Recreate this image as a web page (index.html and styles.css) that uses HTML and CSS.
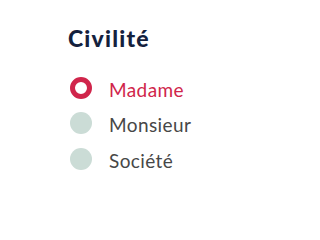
FILE: index.html
```html
<!DOCTYPE html>
<html lang="fr">
<head>
<meta charset="utf-8">
<link rel="stylesheet" href="styles.css">
</head>
<body>
<fieldset class="civility">
  <legend class="title">Civilité</legend>
  <label class="option option--checked"><span class="radio"></span><span class="label">Madame</span></label>
  <label class="option"><span class="radio"></span><span class="label">Monsieur</span></label>
  <label class="option"><span class="radio"></span><span class="label">Société</span></label>
</fieldset>
</body>
</html>
```
FILE: styles.css
```css
html, body {
  margin: 0;
  padding: 0;
  background: #ffffff;
}
body {
  font-family: Lato, "Open Sans", sans-serif;
  width: 259px;
  height: 206px;
}
.civility {
  border: 0;
  margin: 0;
  padding: 26px 0 0 68px;
  display: flex;
  flex-direction: column;
}
.title {
  padding: 0;
  float: left;
  font-size: 23px;
  line-height: 24px;
  font-weight: 900;
  letter-spacing: 1.2px;
  color: #14213d;
  margin-bottom: 20px;
}
.option {
  display: flex;
  align-items: center;
  gap: 17px;
  height: 35.5px;
  padding-left: 2px;
}
.radio {
  box-sizing: border-box;
  width: 22px;
  height: 22px;
  border-radius: 50%;
  background: #cbdcd6;
  flex: none;
}
.option--checked .radio {
  background: #ffffff;
  border: 5px solid #d0254b;
}
.label {
  font-size: 19px;
  line-height: 22px;
  letter-spacing: 0.4px;
  color: #474747;
  padding-top: 4px;
}
.option--checked .label {
  color: #d0254b;
}
```
